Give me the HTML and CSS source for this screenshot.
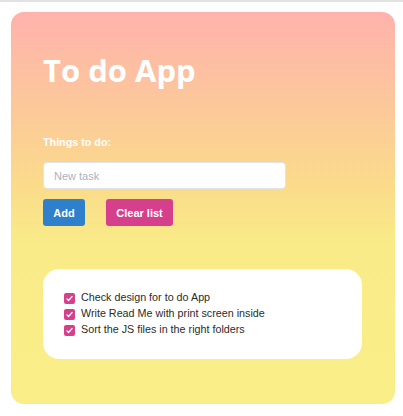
FILE: index.html
```html
<!DOCTYPE html>
<html>
<head>
<meta charset="utf-8">
<link rel="stylesheet" href="styles.css">
</head>
<body>
<div class="topline"></div>
<main class="card">
  <h1 class="title">To do App</h1>
  <label class="label">Things to do:</label>
  <input class="input" type="text" placeholder="New task">
  <div class="buttons">
    <button class="btn btn-add">Add</button>
    <button class="btn btn-clear">Clear list</button>
  </div>
  <div class="list">
    <div class="item"><span class="check"><svg viewBox="0 0 12 12" width="12" height="12"><path d="M3.2 6.4 L5 8.2 L8.8 3.8" fill="none" stroke="#fff" stroke-width="1.4" stroke-linecap="round" stroke-linejoin="round"/></svg></span>Check design for to do App</div>
    <div class="item"><span class="check"><svg viewBox="0 0 12 12" width="12" height="12"><path d="M3.2 6.4 L5 8.2 L8.8 3.8" fill="none" stroke="#fff" stroke-width="1.4" stroke-linecap="round" stroke-linejoin="round"/></svg></span>Write Read Me with print screen inside</div>
    <div class="item"><span class="check"><svg viewBox="0 0 12 12" width="12" height="12"><path d="M3.2 6.4 L5 8.2 L8.8 3.8" fill="none" stroke="#fff" stroke-width="1.4" stroke-linecap="round" stroke-linejoin="round"/></svg></span>Sort the JS files in the right folders</div>
  </div>
</main>
</body>
</html>
```
FILE: styles.css
```css
html, body { margin: 0; padding: 0; background: #fff; }
body { font-family: "Liberation Sans", Arial, sans-serif; }
.topline { height: 2px; background: #e2e2e2; }
.card {
  margin: 10px 8px 12px 11px;
  width: 384px;
  height: 392px;
  box-sizing: border-box;
  border-radius: 13px;
  background: linear-gradient(to bottom, #ffb2ac 0%, #fcc99a 25%, #fadc8a 45%, #f9ec88 60%, #f9ee88 100%);
  padding: 39px 32px 0 32px;
  display: flex;
  flex-direction: column;
}
.title {
  margin: 0;
  font-family: "Open Sans", sans-serif;
  font-weight: 700;
  font-size: 31px;
  line-height: 38px;
  color: #fff;
}
.label {
  margin-top: 47px;
  font-size: 10.75px;
  font-weight: bold;
  color: #fff;
  line-height: 13px;
}
.input {
  margin-top: 13px;
  width: 243px;
  height: 27px;
  box-sizing: border-box;
  border: 1px solid #dfe3ea;
  border-radius: 4px;
  background: #fff;
  padding: 0 10px;
  font-family: "Liberation Sans", Arial, sans-serif;
  font-size: 11px;
  outline: none;
}
.input::placeholder { color: #aab2bf; }
.buttons { margin-top: 10px; display: flex; gap: 21px; }
.btn {
  height: 27px;
  border: none;
  border-radius: 3px;
  color: #fff;
  font-family: "Liberation Sans", Arial, sans-serif;
  font-weight: bold;
  font-size: 11px;
  padding: 0;
  white-space: nowrap;
}
.btn-add { background: #2f80cc; width: 42px; }
.btn-clear { background: #d63f8c; width: 67px; }
.list {
  margin-top: 43px;
  width: 319px;
  height: 90px;
  box-sizing: border-box;
  background: #fff;
  border-radius: 16px;
  padding: 20px 21px;
}
.item {
  display: flex;
  align-items: center;
  font-size: 10.75px;
  color: #2b2b2b;
  line-height: 16px;
}
.check {
  width: 11px;
  height: 11px;
  border-radius: 2px;
  background: #d63f8c;
  margin-right: 6px;
  display: inline-flex;
  align-items: center;
  justify-content: center;
  margin-top: 2px;
}
.check svg { width: 11px; height: 11px; }
```
